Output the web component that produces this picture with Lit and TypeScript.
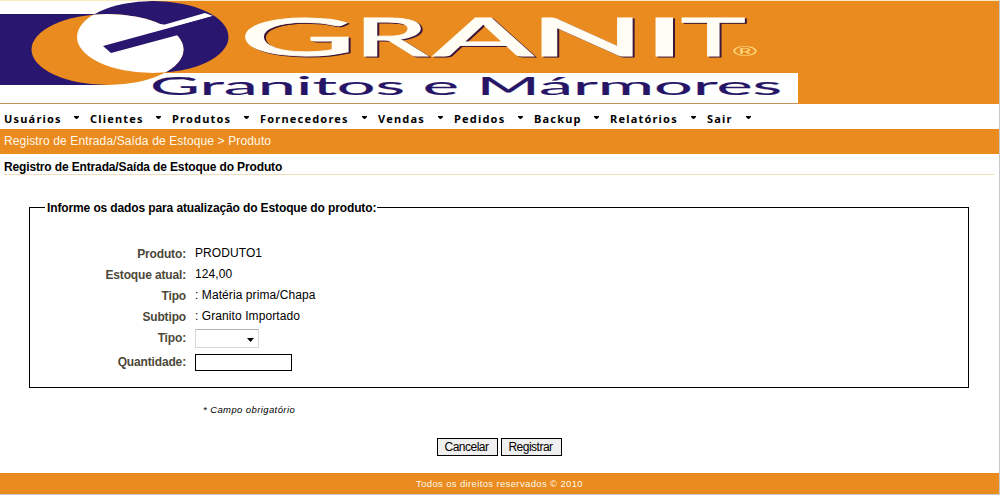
import { LitElement, html, svg, css } from "lit";
import { customElement } from "lit/decorators.js";

// letter, left x, horizontal stretch
const WORDMARK: [string, number, number][] = [
  ["G", 239, 3.06],
  ["R", 354, 2.25],
  ["A", 433, 2.83],
  ["N", 529, 2.9],
  ["I", 643, 2.9],
  ["T", 681, 2.08],
];

@customElement("granit-banner")
export class GranitBanner extends LitElement {
  static styles = css`
    :host { display: block; height: 104px; }
    svg { display: block; }
    .letters { filter: drop-shadow(2px 1px 0 #3c1538); }
    .word { font: 400 52.500px Lato, sans-serif; fill: #fffdf4; stroke: #fffdf4; stroke-width: 0.9; }
    .tag { font: 400 25px Lato, sans-serif; fill: #261566; stroke: #261566; stroke-width: 0.15; }
    .reg { font: 13px "Liberation Sans", sans-serif; fill: #ffe08a; }
  `;
  render() {
    return html`<svg width="999" height="104" viewBox="0 0 999 104">
      <rect width="999" height="104" fill="#fff" />
      <rect x="150" width="849" height="73" fill="#e98b1f" />
      <rect x="798" width="201" height="104" fill="#e98b1f" />
      <rect width="999" height="1" fill="#fbeac0" />
      <rect y="103" width="798" height="1" fill="#c4935a" />
      <rect y="14" width="108" height="71" fill="#28166f" />
      <ellipse cx="153" cy="37" rx="75.500" ry="36" fill="#28166f" />
      <ellipse cx="107.500" cy="49.500" rx="76" ry="35.500" fill="#e98b1f" />
      <clipPath id="first"><ellipse cx="153" cy="37" rx="76" ry="36" /></clipPath>
      <ellipse cx="107.500" cy="49.500" rx="76" ry="35.500" fill="#fff" clip-path="url(#first)" />
      <path d="M152 24L165 24.500L205 13L213 16L150 34Z" fill="#fff" />
      <path d="M103 46L213 16L205 28L178 35L111 53Z" fill="#28166f" />
      <g class="letters">${WORDMARK.map(([c, x, s]) => svg`
        <text class="word" transform="translate(${x} 55.500) scale(${s} 1)">${c}</text>`)}</g>
      <text class="reg" transform="translate(733 56) scale(2.400 1)" textLength="10" lengthAdjust="spacingAndGlyphs">®</text>
      <text class="tag" transform="translate(150 95) scale(2.900 1)" textLength="218" lengthAdjust="spacingAndGlyphs">Granitos e Mármores</text>
    </svg>`;
  }
}

const MENU = ["Usuários", "Clientes", "Produtos", "Fornecedores", "Vendas", "Pedidos", "Backup", "Relatórios", "Sair"];

@customElement("app-root")
export class AppRoot extends LitElement {
  static styles = css`
    :host {
      display: block; box-sizing: border-box; width: 1000px; height: 495px;
      border-right: 1px solid #c8c8c8; border-bottom: 1px solid #c8c8c8; background: #fff;
      font: 12px/15px "Liberation Sans", Arial, sans-serif; color: #000; overflow: hidden;
    }
    nav {
      display: grid; grid-template-columns: 86px 82px 88px 118px 76px 80px 76px 97px 46px;
      height: 25px; padding-left: 4px; box-sizing: border-box;
      font: bold 11px/15px "Noto Sans", sans-serif; letter-spacing: 1.200px;
    }
    .item { display: flex; justify-content: space-between; padding: 7px 11px 0 0; white-space: nowrap; }
    .item svg { margin-top: 5px; }
    .item:last-child { padding-right: 2px; }
    .crumb { background: #e98b1f; color: #fff8e8; height: 25px; line-height: 25px; padding-left: 4px; font-size: 12px; letter-spacing: 0.130px; }
    h1 { font-size: 12px; line-height: 15px; height: 14px; margin: 0 5px 0 4px; padding-top: 6px; border-bottom: 1px solid #f5dcb8; letter-spacing: -0.140px; }
    fieldset {
      box-sizing: border-box; width: 940px; height: 188px; margin: 25px 0 0 29px; padding: 31px 0 0 0;
      border: 1px solid #000;
    }
    legend { margin-left: 15px; padding: 1px 1px 0 2px; font-weight: bold; line-height: 14px; letter-spacing: -0.120px; }
    .row { display: grid; grid-template-columns: 156px auto; column-gap: 9px; height: 21px; justify-content: start; letter-spacing: 0.080px; }
    .label { text-align: right; font-weight: bold; color: #4c4839; padding-top: 1px; letter-spacing: -0.150px; }
    .row.pick { height: 24px; }
    .select {
      box-sizing: border-box; width: 64px; height: 19px; border: 1px solid #d5d9dc; border-top-color: #b0b3b6;
      border-radius: 1px; display: flex; justify-content: flex-end; align-items: center; padding: 2px 4px 0 0; margin-top: -1px;
    }
    .input { box-sizing: border-box; width: 97px; height: 17px; border: 1px solid #000; }
    .note { margin: 14px 0 0 203px; font-size: 9.500px; font-style: italic; line-height: 15px; letter-spacing: 0.400px; }
    .buttons { display: flex; gap: 3px; justify-content: center; margin-top: 21px; }
    button {
      box-sizing: border-box; width: 61px; height: 18px; border: 1px solid #000; background: #efefef;
      padding: 0 2px 0 0; font: 12px/14px "Liberation Sans", Arial, sans-serif; letter-spacing: -0.500px; color: #000;
    }
    footer { margin-top: 17px; height: 21px; background: #e98b1f; color: #fff8e8; text-align: center; font-size: 9.500px; line-height: 21px; letter-spacing: 0.360px; }
  `;
  private row(label: string, value: string) {
    return html`<div class="row"><span class="label">${label}</span><span>${value}</span></div>`;
  }
  render() {
    return html`
      <granit-banner></granit-banner>
      <nav>${MENU.map((m) => html`<span class="item">${m}
        <svg width="5" height="3" viewBox="0 0 5 3"><path d="M0 0h5v1L3 3H2L0 1z" /></svg></span>`)}</nav>
      <div class="crumb">Registro de Entrada/Saída de Estoque &gt; Produto</div>
      <h1>Registro de Entrada/Saída de Estoque do Produto</h1>
      <fieldset>
        <legend>Informe os dados para atualização do Estoque do produto:</legend>
        ${this.row("Produto:", "PRODUTO1")}
        ${this.row("Estoque atual:", "124,00")}
        ${this.row("Tipo", ": Matéria prima/Chapa")}
        ${this.row("Subtipo", ": Granito Importado")}
        <div class="row pick"><span class="label">Tipo:</span>
          <span class="select"><svg width="7" height="4" viewBox="0 0 7 4"><path d="M0 0h7L3.500 4z" /></svg></span></div>
        <div class="row"><span class="label">Quantidade:</span><span class="input"></span></div>
      </fieldset>
      <div class="note">* Campo obrigatório</div>
      <div class="buttons"><button>Cancelar</button><button>Registrar</button></div>
      <footer>Todos os direitos reservados © 2010</footer>
    `;
  }
}
